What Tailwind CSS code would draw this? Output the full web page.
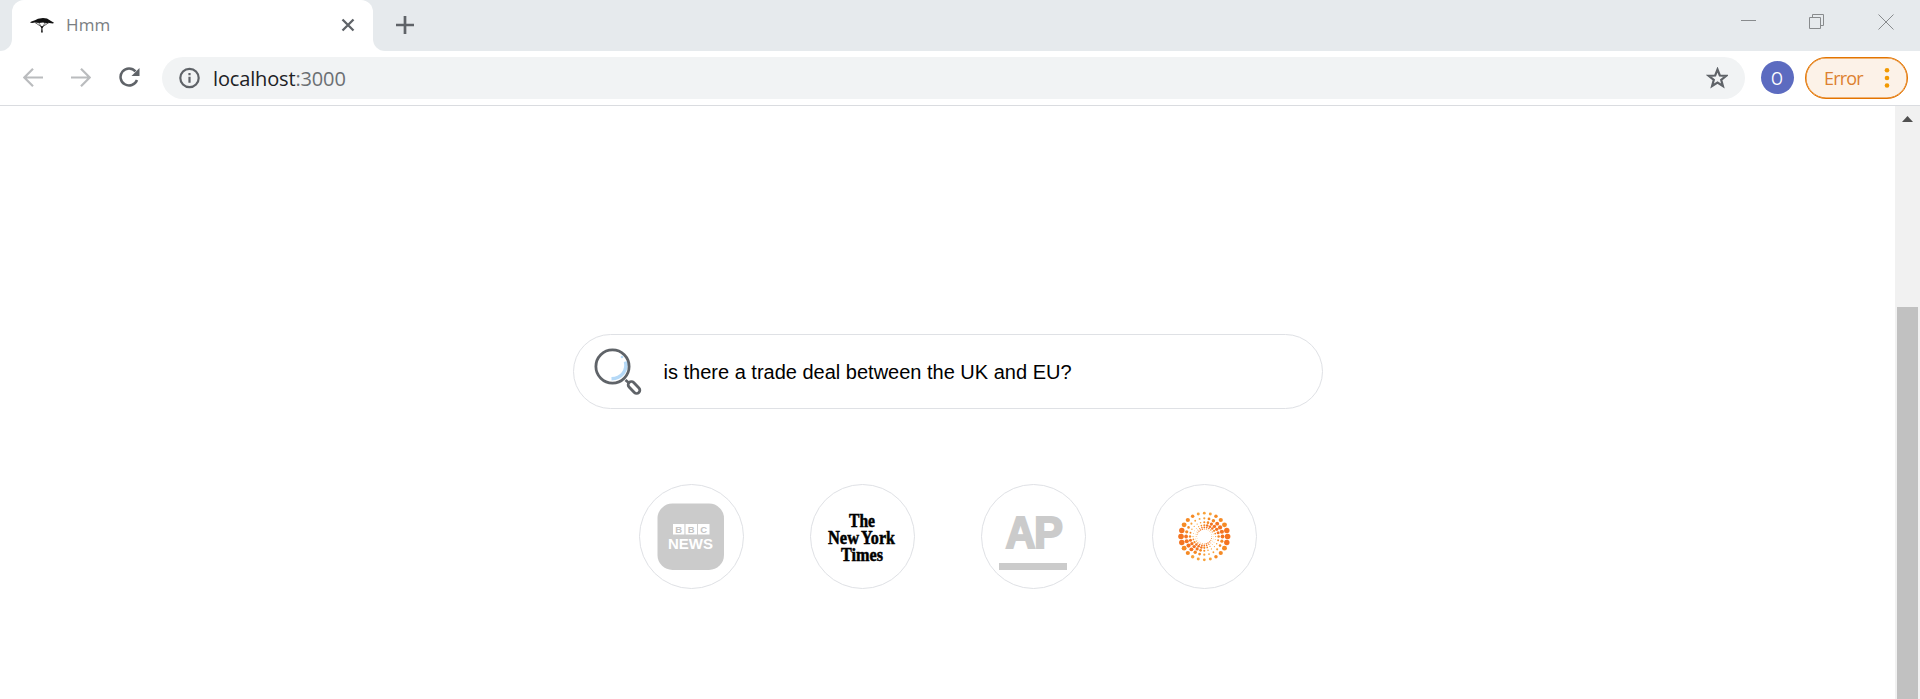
<!DOCTYPE html>
<html lang="en">
<head>
<meta charset="utf-8">
<title>Hmm</title>
<script src="https://cdn.jsdelivr.net/npm/@tailwindcss/browser@4"></script>
</head>
<body class="flex h-[699px] w-[1920px] flex-col overflow-hidden bg-white font-['Open_Sans','Noto_Sans',sans-serif]">
  <!-- Tab strip -->
  <header class="flex h-[51px] shrink-0 bg-[#e6eaed]">
    <div class="w-3 bg-white"><div class="h-full rounded-br-[12px] bg-[#e6eaed]"></div></div>
    <div class="bg-[#e6eaed]">
      <div class="flex h-[51px] w-[361px] items-center rounded-t-[12px] bg-white pl-[18px] pr-[18px] pb-[1px]">
        <svg class="h-[16px] w-[24px]" viewBox="0 0 24 16" fill="none">
          <path d="M0 5.500C1 4.300 3 4.200 5 3.200L8 1.800l5-.8 4 .6 2 1.200 2 1.300 3 1.700-1 .6-4-.5-3 .3-3-.6-4 .5-4-.5-3 .4z" fill="#111"/>
          <path d="M5 5.500l6 4M19 5.500l-6 4M8.500 5.500l3.500 5 3.500-5" stroke="#444" stroke-width=".8"/>
          <path d="M10.500 9.300l.9 2.200-.3 4h1.700l-.4-4 1.100-2.200z" fill="#111"/>
        </svg>
        <span class="ml-[12px] text-[17px] leading-[22px] tracking-[0.1px] text-[#7a7e82]">Hmm</span>
        <svg class="ml-auto h-[14px] w-[14px]" viewBox="0 0 14 14" stroke="#5f6368" stroke-width="2.300"><path d="M1.500 1.500l11 11M12.500 1.500l-11 11"/></svg>
      </div>
    </div>
    <div class="flex-1 bg-white">
      <div class="flex h-full items-center rounded-bl-[12px] bg-[#e6eaed] pl-[23px] pb-[1px]">
        <svg class="h-[18px] w-[18px]" viewBox="0 0 18 18" stroke="#5f6368" stroke-width="2.700"><path d="M9 0v18M0 9h18"/></svg>
        <div class="mb-[7px] ml-auto flex h-[16px] items-center pr-[26px]">
          <svg class="h-[16px] w-[16px]" viewBox="0 0 16 16" stroke="#888b8d"><path d="M0 6.500h15"/></svg>
          <svg class="ml-[52px] h-[16px] w-[16px]" viewBox="0 0 16 16" fill="none" stroke="#888b8d"><path d="M.5 3.500h11v11h-11zM3.500 3V.5h11v11h-3"/></svg>
          <svg class="ml-[53px] h-[16px] w-[16px]" viewBox="0 0 16 16" stroke="#888b8d"><path d="M.5.5l15 15M15.500.5l-15 15"/></svg>
        </div>
      </div>
    </div>
  </header>

  <!-- Toolbar -->
  <nav class="flex h-[55px] shrink-0 items-start border-b border-[#dadce0] bg-white pt-[6px] pl-[23px] pr-[12px]">
    <svg class="mt-[11px] h-[20px] w-[20px]" viewBox="0 0 20 20" fill="none" stroke="#babcbe" stroke-width="2.200"><path d="M20 9.500H1.500M10 .8L1.300 9.500l8.700 8.700"/></svg>
    <svg class="mt-[11px] ml-[28px] h-[20px] w-[20px]" viewBox="0 0 20 20" fill="none" stroke="#babcbe" stroke-width="2.200"><path d="M0 9.500h18.500M10 .8l8.700 8.700-8.700 8.700"/></svg>
    <svg class="mt-[10px] ml-[28px] h-[21px] w-[21px]" viewBox="0 0 21 21" fill="none"><path d="M16.500 4.400A8.500 8.500 0 1 0 18 13" stroke="#5f6368" stroke-width="2.500"/><path d="M20.500 1v8H12.500z" fill="#5f6368"/></svg>
    <div class="ml-[22px] flex h-[42px] w-[1583px] items-center rounded-full bg-[#f1f3f4] pl-[17px] pr-[17px]">
      <svg class="h-[22px] w-[22px]" viewBox="0 0 22 22" fill="none" stroke="#5f6368" stroke-width="2.200"><circle cx="10.500" cy="11" r="9.200"/><path d="M10.500 9.800v6M10.500 6v2.200"/></svg>
      <span class="ml-[12px] pt-[2px] text-[20px] leading-[26px] tracking-[-0.15px] text-[#202124]">localhost<span class="text-[#6b6f73]">:3000</span></span>
      <svg class="ml-auto h-[22px] w-[22px]" viewBox="0 0 22 22" fill="none" stroke="#5f6368" stroke-width="2.200"><path d="M11.500 2.500l2.300 6 6.400.3-5 4 1.700 6.200-5.400-3.500L6.100 19l1.700-6.200-5-4 6.400-.3z"/></svg>
    </div>
    <div class="mt-[4px] ml-[16px] flex h-[33px] w-[33px] items-center justify-center rounded-full bg-[#5c6bc0] text-white"><span class="scale-x-85 text-[18px] leading-none">O</span></div>
    <div class="ml-[11px] flex h-[42px] w-[103px] items-center rounded-full border border-[#e37400] bg-[#fcf2e8] pl-[18px] pr-[17px] ring-[0.5px] ring-inset ring-[#e37400]">
      <span class="text-[18px] leading-[24px] tracking-[-0.8px] text-[#dc8130]">Error</span>
      <svg class="ml-auto h-[20px] w-[6px]" viewBox="0 0 6 20" fill="#f29900"><circle cx="3" cy="2.300" r="2.300"/><circle cx="3" cy="10" r="2.300"/><circle cx="3" cy="17.500" r="2.300"/></svg>
    </div>
  </nav>

  <div class="flex min-h-0 flex-1">
    <!-- Page -->
    <main class="flex flex-1 flex-col items-center pt-[228px]">
      <div class="flex h-[75px] w-[750px] items-center rounded-full border border-[#dfe1e5] pl-[20px]">
        <svg class="h-[48px] w-[48px]" viewBox="0 0 48 48" fill="none">
          <path d="M31.500 13.500C33.500 22 28 30.500 17.500 30.800" stroke="#b5d9f7" stroke-width="3.500"/>
          <circle cx="28" cy="9" r="1.300" fill="#b5d9f7"/>
          <circle cx="18.500" cy="18.500" r="16.600" stroke="#5f6368" stroke-width="2.800"/>
          <path d="M31.500 32l3.500 3" stroke="#5f6368" stroke-width="2.800"/>
          <rect x="33" y="36.300" width="14" height="6.400" rx="3.200" transform="rotate(46 40 39.500)" stroke="#5f6368" stroke-width="2.800"/>
        </svg>
        <span class="ml-[22px] font-['Liberation_Sans',Arial,sans-serif] text-[20px] leading-[24px] text-black">is there a trade deal between the UK and EU?</span>
      </div>

      <div class="mt-[75px] flex gap-[66px]">
        <svg class="h-[105px] w-[105px]" viewBox="0 0 105 105">
          <circle cx="52.500" cy="52.500" r="52" fill="#fff" stroke="#dfe1e5"/>
          <rect x="18.500" y="19.500" width="66.500" height="66.500" rx="15" fill="#cbcbcb"/>
          <path d="M34 40h11.400v10.500H34zM46.500 40h11.600v10.500H46.500zM59 40h11.500v10.500H59z" fill="#fff"/>
          <g font-family="Liberation Sans" font-weight="700" font-size="9.500" fill="#c4c4c4" text-anchor="middle"><text x="39.700" y="48.500">B</text><text x="52.300" y="48.500">B</text><text x="64.700" y="48.500">C</text></g>
          <text x="29" y="65.300" textLength="45" lengthAdjust="spacingAndGlyphs" font-family="Liberation Sans" font-weight="700" font-size="15" fill="#fff">NEWS</text>
        </svg>
        <svg class="h-[105px] w-[105px]" viewBox="0 0 105 105">
          <circle cx="52.500" cy="52.500" r="52" fill="#fff" stroke="#dfe1e5"/>
          <g font-family="Liberation Serif" font-weight="700" font-size="18" fill="#000" stroke="#000" stroke-width=".5">
            <text x="39" y="43" textLength="26" lengthAdjust="spacingAndGlyphs">The</text>
            <text x="18" y="60" textLength="31" lengthAdjust="spacingAndGlyphs">New</text>
            <text x="51" y="60" textLength="34" lengthAdjust="spacingAndGlyphs">York</text>
            <text x="31" y="76.500" textLength="42" lengthAdjust="spacingAndGlyphs">Times</text>
          </g>
        </svg>
        <svg class="h-[105px] w-[105px]" viewBox="0 0 105 105">
          <circle cx="52.500" cy="52.500" r="52" fill="#fff" stroke="#dfe1e5"/>
          <g font-family="Liberation Sans" font-weight="700" font-size="44" fill="#cbcbcb" stroke="#cbcbcb" stroke-width="2">
            <text x="24.500" y="64" textLength="30" lengthAdjust="spacingAndGlyphs">A</text>
            <text x="53" y="64" textLength="29" lengthAdjust="spacingAndGlyphs">P</text>
          </g>
          <path d="M18 79h68v7H18z" fill="#cbcbcb"/>
        </svg>
        <svg id="sunburst" class="h-[105px] w-[105px]" viewBox="0 0 105 105">
          <circle cx="52.500" cy="52.500" r="52" fill="#fff" stroke="#dfe1e5"/>
        </svg>
      </div>
    </main>

    <!-- Scrollbar -->
    <aside class="flex w-[25px] flex-col items-center bg-[#f1f1f1] pt-[10px]">
      <svg class="h-[6px] w-[11px]" viewBox="0 0 11 6" fill="#505050"><path d="M0 6L5.500 0 11 6z"/></svg>
      <div class="mt-[185px] w-[21px] flex-1 bg-[#c1c1c1]"></div>
    </aside>
  </div>

  <script>
    // Rings of dots: [radius, smallest dot, largest dot, angle of the largest dot]
    const rings = [
      [23.3, 1.4, 2.8, 0],
      [18.2, 0.9, 2.1, 155],
      [14.3, 0.6, 1.7, 140],
      [11.3, 0.4, 1.3, 120],
      [9.2, 0.3, 0.9, 100],
      [7.5, 0.3, 0.7, 60]
    ];
    const svg = document.getElementById('sunburst');
    for (const [r, min, max, peak] of rings) {
      for (let i = 0; i < 24; i++) {
        const a = i * Math.PI / 12;
        const w = Math.abs(Math.cos(a - peak * Math.PI / 180));
        const c = document.createElementNS('http://www.w3.org/2000/svg', 'circle');
        c.setAttribute('cx', 52.3 + r * Math.cos(a));
        c.setAttribute('cy', 52.5 + r * Math.sin(a));
        c.setAttribute('r', min + (max - min) * w * w);
        c.setAttribute('fill', w > 0.9 ? '#f47421' : w > 0.5 ? '#f58a25' : '#f8a23a');
        svg.appendChild(c);
      }
    }
  </script>
</body>
</html>
